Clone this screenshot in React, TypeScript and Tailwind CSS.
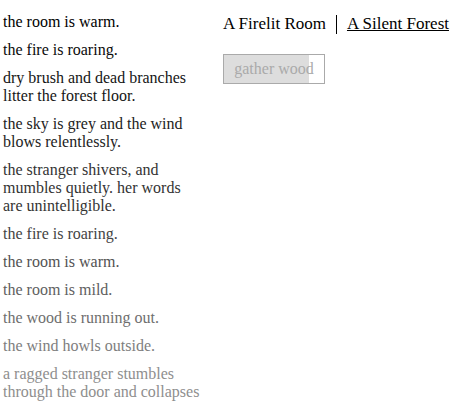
const notes = [
  { t: "the room is warm.", c: "text-[#000000]" },
  { t: "the fire is roaring.", c: "text-[#0a0a0a]" },
  { t: "dry brush and dead branches litter the forest floor.", c: "text-[#151515]" },
  { t: "the sky is grey and the wind blows relentlessly.", c: "text-[#222222]" },
  { t: "the stranger shivers, and mumbles quietly. her words are unintelligible.", c: "text-[#333333]" },
  { t: "the fire is roaring.", c: "text-[#444444]" },
  { t: "the room is warm.", c: "text-[#525252]" },
  { t: "the room is mild.", c: "text-[#606060]" },
  { t: "the wood is running out.", c: "text-[#6e6e6e]" },
  { t: "the wind howls outside.", c: "text-[#7e7e7e]" },
  { t: "a ragged stranger stumbles through the door and collapses", c: "text-[#8e8e8e]" },
];

export default function App() {
  return (
    <div className="w-[458px] h-[405px] overflow-hidden bg-white flex font-[family-name:'Liberation_Serif',serif]">
      <div className="w-[220px] shrink-0 pl-[3px] pt-[13px] text-[16px] leading-[18px]">
        {notes.map((n, i) => (
          <div key={i} className={`w-[200px] mb-[10px] ${n.c}`}>{n.t}</div>
        ))}
      </div>
      <div className="pl-[3px] pt-[13px]">
        <div className="flex items-center text-[17px] leading-[22px] text-black">
          <span>A Firelit Room</span>
          <span className="mx-[10px] w-px h-[19px] bg-black"></span>
          <span className="underline">A Silent Forest</span>
        </div>
        <div className="mt-[19px] relative w-[102px] h-[30px] border border-[#aaaaaa] bg-white">
          <div className="absolute left-0 top-0 bottom-0 w-[85px] bg-[#dddddd]"></div>
          <div className="relative text-center text-[16px] leading-[28px] text-[#aaaaaa]">gather wood</div>
        </div>
      </div>
    </div>
  );
}
